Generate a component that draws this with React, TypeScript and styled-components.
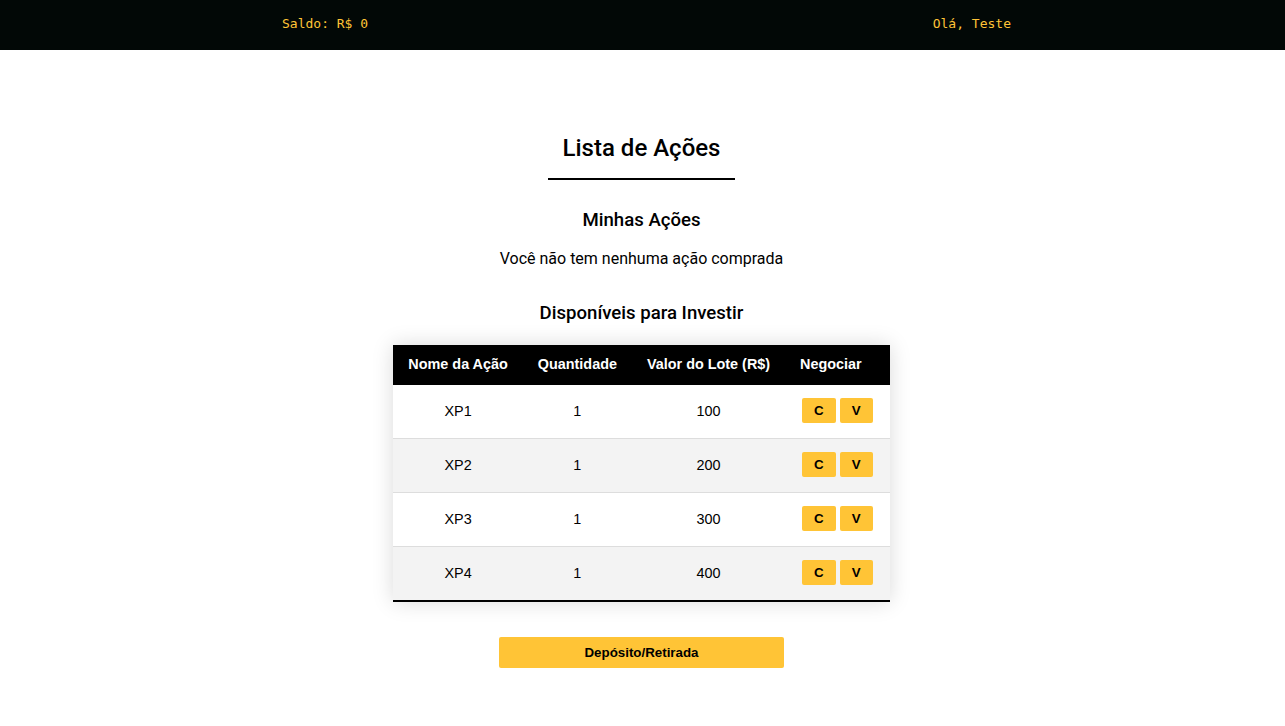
import styled, { createGlobalStyle } from "styled-components";

const acoes = [
  { nome: "XP1", quantidade: 1, valor: 100 },
  { nome: "XP2", quantidade: 1, valor: 200 },
  { nome: "XP3", quantidade: 1, valor: 300 },
  { nome: "XP4", quantidade: 1, valor: 400 },
];

const App = () => {
  return (
    <>
      <GlobalStyle />
      <Header>
        <HeaderText>Saldo: R$ 0</HeaderText>
        <HeaderText>Olá, Teste</HeaderText>
      </Header>
      <Main>
        <Title>Lista de Ações</Title>
        <SubTitle>Minhas Ações</SubTitle>
        <Message>Você não tem nenhuma ação comprada</Message>
        <SubTitle $top={34}>Disponíveis para Investir</SubTitle>
        <Table>
          <thead>
            <HeadRow>
              <TableHeader>Nome da Ação</TableHeader>
              <TableHeader>Quantidade</TableHeader>
              <TableHeader>Valor do Lote (R$)</TableHeader>
              <TableHeader>Negociar</TableHeader>
            </HeadRow>
          </thead>
          <tbody>
            {acoes.map((acao) => (
              <TableRow key={acao.nome}>
                <TableCell>{acao.nome}</TableCell>
                <TableCell>{acao.quantidade}</TableCell>
                <TableCell>{acao.valor}</TableCell>
                <TableCell>
                  <Actions>
                    <SmallButton type="button">C</SmallButton>
                    <SmallButton type="button">V</SmallButton>
                  </Actions>
                </TableCell>
              </TableRow>
            ))}
          </tbody>
        </Table>
        <WideButton type="button">Depósito/Retirada</WideButton>
      </Main>
    </>
  );
};

const GlobalStyle = createGlobalStyle`
  body {
    margin: 0;
    background: #ffffff;
    font-family: Roboto, "Liberation Sans", sans-serif;
    color: #000000;
  }
`;

const Header = styled.header`
  height: 50px;
  padding: 0 274px 0 282px;
  background-color: #020806;
  display: flex;
  align-items: center;
  justify-content: space-between;
`;

const HeaderText = styled.span`
  font-family: "DejaVu Sans Mono", monospace;
  font-size: 13px;
  color: #ffc436;
  margin-top: -4px;
`;

const Main = styled.main`
  display: flex;
  flex-direction: column;
  align-items: center;
  padding-right: 2px;
`;

const Title = styled.h1`
  margin: 84px 0 0;
  padding: 0 15px 16px;
  font-size: 24px;
  line-height: 28px;
  font-weight: 500;
  border-bottom: 2px solid #000000;
`;

const SubTitle = styled.h2<{ $top?: number }>`
  margin: ${(p) => p.$top ?? 29}px 0 0;
  font-size: 18.6px;
  line-height: 22px;
  font-weight: 500;
`;

const Message = styled.p`
  margin: 18px 0 0;
  font-size: 16px;
  line-height: 19px;
`;

const Table = styled.table`
  margin-top: 21px;
  border-collapse: collapse;
  font-family: "Liberation Sans", Arial, sans-serif;
  font-size: 14.4px;
  box-shadow: 0 0 20px rgba(0, 0, 0, 0.15);
`;

const HeadRow = styled.tr`
  background-color: #000000;
  color: #ffffff;
`;

const TableHeader = styled.th`
  padding: 11px 15px 13px;
  text-align: left;
  font-weight: bold;
  line-height: 16px;
`;

const TableRow = styled.tr`
  border-bottom: 1px solid #dddddd;

  &:nth-of-type(even) {
    background-color: #f3f3f3;
  }

  &:last-of-type {
    border-bottom: 2px solid #000000;
  }
`;

const TableCell = styled.td`
  padding: 13px 15px 15px;
  text-align: center;
  line-height: 16px;
`;

const Actions = styled.div`
  display: flex;
  justify-content: center;
`;

const SmallButton = styled.button`
  height: 25px;
  margin: 0 2px;
  padding: 0 12px;
  border: none;
  border-radius: 2px;
  background-color: #ffc436;
  font-family: "Liberation Sans", Arial, sans-serif;
  font-size: 13.33px;
  font-weight: bold;
  color: #000000;
  cursor: pointer;
`;

const WideButton = styled.button`
  margin-top: 35px;
  width: 285px;
  height: 31px;
  border: none;
  border-radius: 2px;
  background-color: #ffc436;
  font-family: "Liberation Sans", Arial, sans-serif;
  font-size: 13.33px;
  font-weight: bold;
  color: #000000;
  cursor: pointer;
`;

export default App;
